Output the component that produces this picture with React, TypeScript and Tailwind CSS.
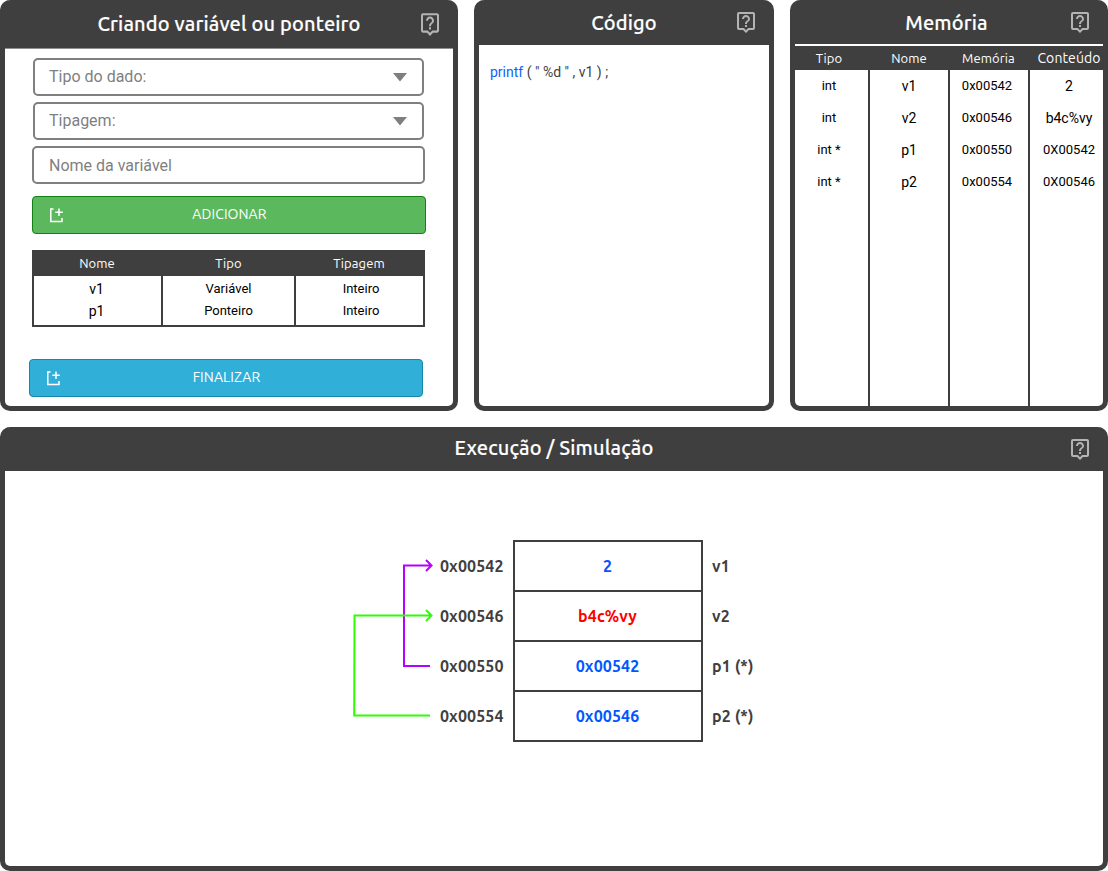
import type { ReactNode } from "react";
import { MdOutlineLiveHelp } from "react-icons/md";

function Panel({
  className,
  heading,
  header,
  icon,
  children,
}: {
  className: string;
  heading: string;
  header: string;
  icon: string;
  children: ReactNode;
}) {
  return (
    <section className={`relative flex flex-col rounded-[10px] border-[5px] border-t-0 border-[#3f3f3f] bg-[#3f3f3f] ${className}`}>
      <header className={`flex shrink-0 items-center justify-center ${header}`}>
        <h2 className="font-['Ubuntu','Noto_Sans',sans-serif] text-[20px] leading-7 font-medium tracking-[0.15px] whitespace-nowrap text-white [-webkit-text-stroke:0.15px_white]">
          {heading}
        </h2>
        <MdOutlineLiveHelp preserveAspectRatio="none" className={`absolute right-[11px] w-6 text-[#b4b4b4] ${icon}`} />
      </header>
      {children}
    </section>
  );
}

function AddIcon() {
  return (
    <svg width="14" height="16" viewBox="0 0 14 16" fill="none" stroke="white" strokeWidth="1.5" className="shrink-0">
      <path d="M3.500 2H.8v12.500h11.200V11M9 1.500v7.500M5.300 5.200H12.800" />
    </svg>
  );
}

function Select({ label }: { label: string }) {
  return (
    <div className="ml-px flex h-[38px] w-[391px] items-center justify-between rounded-[5px] border-2 border-[#7f7f7f] pr-[15px] pl-[14px] text-base text-[#7f7f7f]">
      <span>{label}</span>
      <svg width="14" height="9" viewBox="0 0 14 9" fill="currentColor">
        <path d="M0 0h14L7 8.5z" />
      </svg>
    </div>
  );
}

const variables = [
  ["v1", "Variável", "Inteiro"],
  ["p1", "Ponteiro", "Inteiro"],
];

const memory = [
  { title: "Tipo", head: "text-[13px] pr-[7px]", body: "w-[75px] border-r-2 pr-[5px]", cells: ["int", "int", "int *", "int *"] },
  { title: "Nome", head: "text-[13px] pr-[2px]", body: "w-[80px] border-r-2", cells: ["v1", "v2", "p1", "p2"] },
  { title: "Memória", head: "text-[13px] pr-[3px]", body: "w-[80px] border-r-2 pr-[4px]", cells: ["0x00542", "0x00546", "0x00550", "0x00554"] },
  { title: "Conteúdo", head: "text-[14px] pl-[5px]", body: "w-[73px] pl-[5px]", cells: ["2", "b4c%vy", "0X00542", "0X00546"] },
];

const cells = [
  { address: "0x00542", value: "2", name: "v1", color: "text-[#0057ff]" },
  { address: "0x00546", value: "b4c%vy", name: "v2", color: "text-[#ff0000]" },
  { address: "0x00550", value: "0x00542", name: "p1 (*)", color: "text-[#0057ff]" },
  { address: "0x00554", value: "0x00546", name: "p2 (*)", color: "text-[#0057ff]" },
];

export default function App() {
  return (
    <main className="flex h-[871px] w-[1108px] flex-col gap-4 overflow-hidden bg-white font-['Roboto',sans-serif]">
      <div className="flex h-[411px] gap-4">
        <Panel className="w-[458px]" heading="Criando variável ou ponteiro" header="h-12" icon="top-[11px] h-[26px]">
          <div className="flex flex-1 flex-col rounded-b-[5px] border-t border-[#8f8f8f] bg-white pt-[9px] pl-[27px]">
            <div className="flex flex-col gap-1.5">
              <Select label="Tipo do dado:" />
              <Select label="Tipagem:" />
              <div className="flex h-[38px] w-[393px] items-center rounded-[5px] border-2 border-[#7f7f7f] pt-0.5 pl-[15px] text-base text-[#7f7f7f]">
                Nome da variável
              </div>
            </div>
            <button className="mt-3 flex h-[38px] w-[394px] items-center rounded-[4px] border border-[#128012] bg-[#5cb85c] pl-[17px] text-white">
              <AddIcon />
              <span className="w-[331px] pb-0.5 text-center font-['Ubuntu','Noto_Sans',sans-serif] text-[14px] tracking-[0.1px]">ADICIONAR</span>
            </button>
            <div className="mt-4 w-[393px] border-2 border-t-0 border-[#3f3f3f] text-black">
              <div className="-mx-0.5 grid h-[26px] grid-cols-[130px_133px_128px] items-center bg-[#3f3f3f] pt-0.5 text-center font-['Ubuntu','Noto_Sans',sans-serif] text-[13px] tracking-[0.1px] text-white">
                <span>Nome</span>
                <span>Tipo</span>
                <span>Tipagem</span>
              </div>
              <div className="grid h-[49px] grid-cols-[129px_133px_127px] text-center text-[13px] leading-[22px]">
                {[0, 1, 2].map((col) => (
                  <div key={col} className={col === 0 ? "border-r-2 border-[#3f3f3f] pt-0.5 pr-0.5 text-[14px]" : col === 1 ? "border-r-2 border-[#3f3f3f] pt-0.5" : "pt-0.5 pl-[3px]"}>
                    {variables.map((row) => (
                      <div key={row[0]}>{row[col]}</div>
                    ))}
                  </div>
                ))}
              </div>
            </div>
            <button className="mt-8 -ml-[3px] flex h-[38px] w-[394px] items-center rounded-[4px] border border-[#1687a8] bg-[#30b0d8] pl-[17px] text-white">
              <AddIcon />
              <span className="w-[331px] pb-0.5 text-center font-['Ubuntu','Noto_Sans',sans-serif] text-[14px] tracking-[0.1px]">FINALIZAR</span>
            </button>
          </div>
        </Panel>

        <Panel className="w-[300px]" heading="Código" header="h-[45px] pt-px" icon="top-[10px] h-6">
          <div className="flex-1 rounded-b-[5px] bg-white pt-[17px] pl-[11px] text-[14px] leading-5 whitespace-pre text-[#3f3f3f]">
            <span className="text-[#0b63ff]">printf</span>
            {' ( " %d " , v1 ) ;'}
          </div>
        </Panel>

        <Panel className="w-[318px]" heading="Memória" header="h-11 pt-0.5 pr-[5px]" icon="top-[10px] h-6">
          <div className="flex flex-1 rounded-b-[5px] border-t-2 border-white bg-white">
            {memory.map((col) => (
              <div key={col.title} className="flex flex-col">
                <div className={`h-6 bg-[#3f3f3f] text-center font-['Ubuntu','Noto_Sans',sans-serif] leading-6 tracking-[0.1px] whitespace-nowrap text-white ${col.head}`}>
                  {col.title}
                </div>
                <div className={`flex-1 border-[#3f3f3f] text-center leading-8 text-black ${col.body}`}>
                  {col.cells.map((cell, i) => (
                    <div key={i} className={col.title === "Nome" || (col.title === "Conteúdo" && i < 2) ? "h-8 text-[14px]" : "h-8 text-[13px]"}>
                      {cell}
                    </div>
                  ))}
                </div>
              </div>
            ))}
          </div>
        </Panel>
      </div>

      <Panel className="h-[444px]" heading="Execução / Simulação" header="h-11 pb-0.5" icon="top-[10px] h-6">
        <div className="flex flex-1 items-start rounded-b-[5px] bg-white pt-[69px] pl-[347px] font-['Ubuntu','Noto_Sans',sans-serif] text-[16px] font-bold tracking-[0.1px] text-[#3f3f3f]">
          <svg width="83" height="202" viewBox="0 0 83 202" fill="none" strokeWidth="2">
            <path d="M78 126H52V25.500H79M74 20l5.500 5.500-5.500 5.500" stroke="#b700ff" />
            <path d="M78 175.500H2.200L2.500 75.500H79M74 70l5.500 5.500-5.500 5.500" stroke="#2bff00" />
          </svg>
          <div className="flex w-[78px] flex-col pt-px pl-[5px] leading-[50px]">
            {cells.map((c) => (
              <span key={c.address}>{c.address}</span>
            ))}
          </div>
          <div className="flex w-[190px] flex-col border-2 border-b-0 border-[#3f3f3f] text-center leading-[48px]">
            {cells.map((c) => (
              <span key={c.address} className={`h-[50px] border-b-2 border-[#3f3f3f] pr-px ${c.color}`}>
                {c.value}
              </span>
            ))}
          </div>
          <div className="flex flex-col pt-px pl-[9px] leading-[50px]">
            {cells.map((c) => (
              <span key={c.name}>{c.name}</span>
            ))}
          </div>
        </div>
      </Panel>
    </main>
  );
}
